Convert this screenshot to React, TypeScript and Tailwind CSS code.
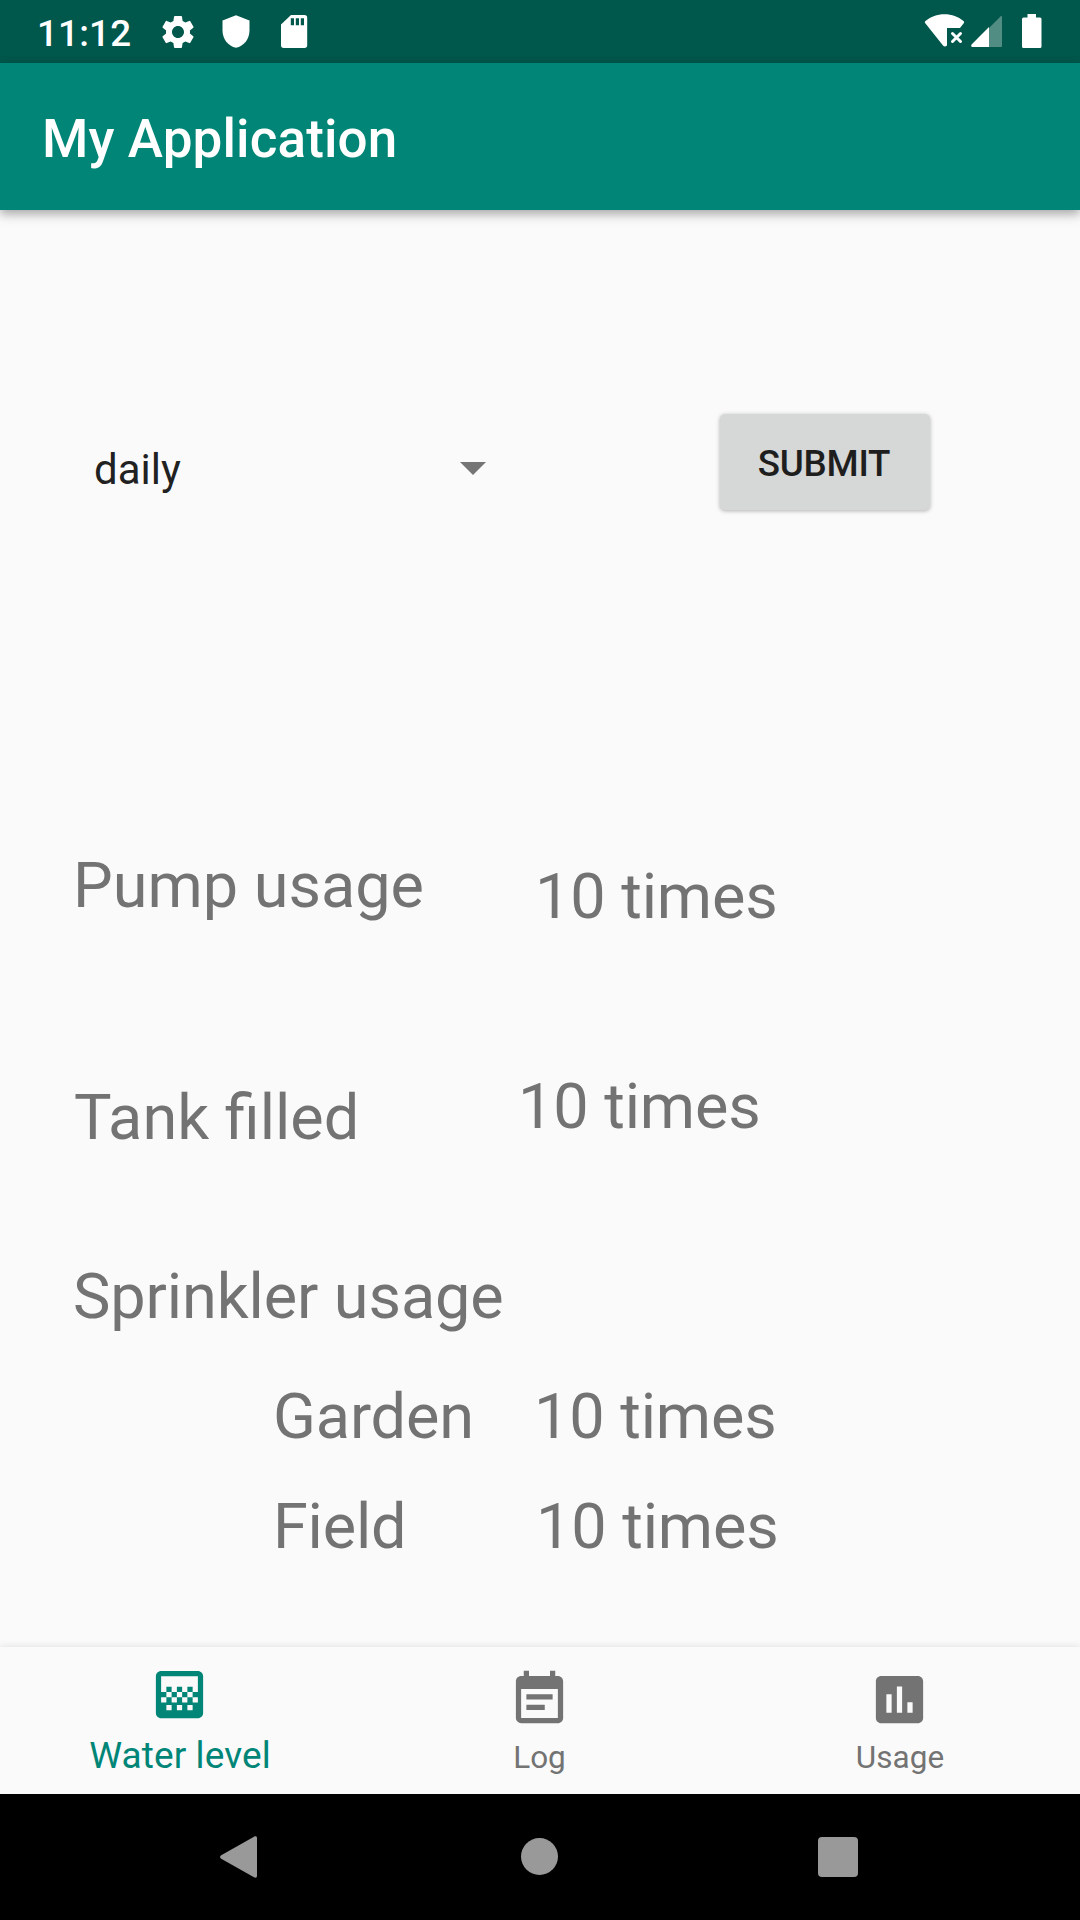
import React from "react";
import { MdAssessment, MdEventNote, MdGradient, MdSettings } from "react-icons/md";

type ReadingProps = {
  label: string;
  value?: string;
  row: string;
  labelClass: string;
  valueClass?: string;
};

function Reading({ label, value, row, labelClass, valueClass = "" }: ReadingProps) {
  return (
    <div className={"flex items-start text-[63px] leading-[74px] text-[#737373] whitespace-nowrap " + row}>
      <span className={"shrink-0 " + labelClass}>{label}</span>
      {value && <span className={"tracking-[-0.1px] " + valueClass}>{value}</span>}
    </div>
  );
}

function StatusBar() {
  return (
    <div className="flex h-[63px] items-start bg-[#00574b] text-white">
      <span className="ml-[37px] mt-[12px] w-[95px] text-[36.75px] font-medium leading-[43px] whitespace-nowrap tracking-[0.2px]">11:12</span>
      <MdSettings className="ml-[26px] mt-[12px] size-[40px]" />
      <svg className="ml-[24px] mt-[15px] h-[33px] w-[28px]" viewBox="0 0 28 33" fill="currentColor">
        <path d="M14 .3 27.500 5.500V15.500c0 8.500-5.500 15.500-13.500 17.300C6 31 .5 24 .5 15.500V5.500z" />
      </svg>
      <svg className="ml-[31px] mt-[15px] h-[33px] w-[27px]" viewBox="0 0 27 33" fill="currentColor">
        <path fillRule="evenodd" d="M10 0h13.500a2.700 2.700 0 0 1 2.700 2.700v27.600A2.700 2.700 0 0 1 23.500 33H2.700A2.700 2.700 0 0 1 0 30.300V9.500zM9.800 3.300v7h3.200v-7zm5 0v7H18v-7zm5 0v7H23v-7z" />
      </svg>
      <svg className="ml-auto mt-[13px] h-[36px] w-[42px]" viewBox="0 0 42 36" fill="currentColor">
        <path d="M1.500 8C7 3.500 13 1.200 20.500 1.200S34 3.500 39.500 8c.8.7.8 1.500.2 2.300L36 15H23v17.500c-1.500 1.500-3 1.200-4 0L1.300 10.300C.7 9.500.7 8.700 1.500 8z" />
        <path d="m28.500 20.500 8 8m0-8-8 8" stroke="currentColor" strokeWidth="3" strokeLinecap="round" />
      </svg>
      <svg className="ml-[5px] mt-[15px] h-[33px] w-[32px]" viewBox="0 0 32 33" fill="currentColor">
        <path opacity=".32" d="M18 32V13L29.500 1.500c1-.8 1.500-.5 1.500.7V30.500c0 1-.5 1.500-1.500 1.500z" />
        <path d="M18 12v20H2C0 32-.3 30.500.8 29.300z" />
      </svg>
      <svg className="ml-[19px] mr-[38px] mt-[14px] h-[34px] w-[20px]" viewBox="0 0 20 34" fill="currentColor">
        <path d="M5.500 0h8.500v3.500h4a1.500 1.500 0 0 1 1.500 1.500v27.500A1.500 1.500 0 0 1 18 34H1.500A1.500 1.500 0 0 1 0 32.500V5a1.500 1.500 0 0 1 1.500-1.500h4z" />
      </svg>
    </div>
  );
}

export default function App() {
  return (
    <div className="flex h-[1920px] w-[1080px] flex-col overflow-hidden bg-[#fafafa] font-['Roboto',sans-serif]">
      <StatusBar />
      <header className="z-10 flex h-[147px] items-center bg-[#008577] pl-[42px] pt-[5px] shadow-[0_4px_10px_rgba(0,0,0,0.34)]">
        <h1 className="text-[53px] font-medium leading-[62px] tracking-[0.12px] whitespace-nowrap text-white">My Application</h1>
      </header>

      <main className="flex h-[1437px] flex-col">
        <div className="mt-[203px] flex h-[98px] items-start">
          <div className="ml-[94px] mt-[7px] flex h-[98px] w-[392px] items-center justify-between">
            <span className="text-[42px] leading-[49px] text-[#212121]">daily</span>
            <svg className="h-[14px] w-[26px]" viewBox="0 0 26 14">
              <path d="M0 0h26L13 13z" fill="#757575" />
            </svg>
          </div>
          <button className="ml-[234px] mt-px h-[96px] w-[210px] rounded-[5px] bg-[#d6d7d7] pr-[2px] pt-[2px] text-[36.75px] font-medium leading-[43px] tracking-[-0.25px] text-[#1e1e1e] shadow-[0_1px_4px_rgba(0,0,0,0.3)]">SUBMIT</button>
        </div>

        <Reading label="Pump usage" value="10 times" row="mt-[338px] h-[85px]" labelClass="ml-[73px] w-[462px]" valueClass="mt-[11px]" />
        <Reading label="Tank filled" value="10 times" row="mt-[136px] h-[85px]" labelClass="ml-[74px] mt-[11px] w-[444px]" />
        <Reading label="Sprinkler usage" row="mt-[105px] h-[74px]" labelClass="ml-[73px] tracking-[-0.1px]" />
        <Reading label="Garden" value="10 times" row="mt-[46px] h-[74px]" labelClass="ml-[273px] w-[261px] tracking-[-0.15px]" />
        <Reading label="Field" value="10 times" row="mt-[36px] h-[74px]" labelClass="ml-[273px] w-[263px] tracking-[-0.2px]" />
      </main>

      <nav className="grid h-[147px] shrink-0 grid-cols-3 bg-[#fafafa] text-[#737373] shadow-[0_0_8px_rgba(0,0,0,0.12)]">
        <div className="flex flex-col items-center pt-[16px] text-[#008577]">
          <MdGradient className="mr-px size-[63px]" />
          <span className="mt-[8px] text-[37px] leading-[43px] tracking-[0.1px]">Water level</span>
        </div>
        <div className="flex flex-col items-center pt-[21px]">
          <MdEventNote className="mr-px size-[63px]" />
          <span className="mt-[8px] mr-px text-[31.5px] leading-[37px]">Log</span>
        </div>
        <div className="flex flex-col items-center pt-[21px]">
          <MdAssessment className="mr-px size-[63px]" />
          <span className="mt-[8px] text-[31.5px] leading-[37px] tracking-[0.1px]">Usage</span>
        </div>
      </nav>

      <footer className="z-10 flex h-[126px] shrink-0 items-center bg-black pl-[220px]">
        <svg className="h-[42px] w-[38px]" viewBox="0 0 38 42">
          <path d="M34 .7 1.200 19.200c-1.500 1-1.500 2.600 0 3.600L34 41.300c1.800.8 3 .2 3-1.500V2.200C37 .5 35.800-.1 34 .7z" fill="#999" />
        </svg>
        <div className="mb-px ml-[263px] size-[37px] rounded-full bg-[#999]" />
        <div className="ml-[260px] size-[40px] rounded-[4px] bg-[#999]" />
      </footer>
    </div>
  );
}
